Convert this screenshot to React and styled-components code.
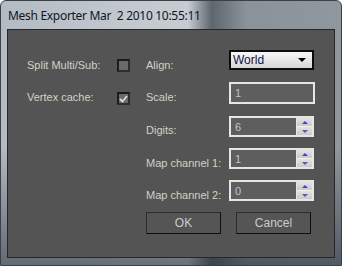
import React from 'react'
import styled, { createGlobalStyle } from 'styled-components'

const Global = createGlobalStyle`
body {
  margin: 0;
  background: #ffffff;
}
`

const Window = styled.div`
width: 342px;
height: 266px;
box-sizing: border-box;
display: flex;
flex-direction: column;
border: 1px solid #3a4046;
border-radius: 6px 6px 0 0;
background:
  linear-gradient(180deg, rgba(0,0,0,0) 0%, rgba(0,0,0,0) 55%, rgba(30,38,48,0.55) 100%),
  linear-gradient(90deg, #b3bbc3 0%, #c3c9cf 40%, #c6ccd2 55%, #5d656d 62%, #8a929a 72%, #8f979f 100%);
overflow: hidden;
`

const TitleBar = styled.div`
height: 28px;
display: flex;
align-items: center;
padding: 1px 0 0 7px;
box-sizing: border-box;
font-family: "Noto Sans", sans-serif;
font-size: 12px;
letter-spacing: -0.3px;
color: #101522;
white-space: pre;
`

const Client = styled.div`
flex: 1;
margin: 0 6px 7px 6px;
border: 1px solid #24282c;
background: #545454;
display: grid;
grid-template-columns: 90px 29px 83px 86px;
grid-template-rows: 32px 34px 32px 32px 32px 22px;
align-items: start;
padding: 20px 0 0 19px;
font-family: "Liberation Sans", Arial, sans-serif;
font-size: 11px;
color: #d2d2c4;
`

const Label = styled.div`
line-height: 13px;
padding-top: ${p => p.top || 9}px;
white-space: nowrap;
`

const Check = styled.div`
width: 13px;
height: 13px;
margin-top: ${p => p.top}px;
box-sizing: border-box;
border: 2px solid #1c1c1c;
border-right-color: #2e2e2e;
border-bottom-color: #2e2e2e;
background: #6a6a6a;
display: flex;
align-items: center;
justify-content: center;
`

const Select = styled.div`
width: 85px;
height: 20px;
box-sizing: border-box;
border: 2px solid #0c0c0c;
background: linear-gradient(180deg, #f6f6f6 0%, #e8e8e8 50%, #d6d6d6 100%);
display: flex;
align-items: center;
justify-content: space-between;
padding: 0 6px 0 2px;
font-size: 12px;
color: #10124a;
`

const Arrow = styled.div`
width: 0;
height: 0;
border-left: 4px solid transparent;
border-right: 4px solid transparent;
border-top: 4px solid #000;
`

const Field = styled.div`
width: ${p => p.w}px;
height: ${p => p.h}px;
box-sizing: border-box;
border: 2px solid #e6e6e6;
background: #5e5e5e;
display: flex;
`

const FieldText = styled.div`
flex: 1;
padding: 3px 0 0 4px;
line-height: 13px;
color: #b9c6d4;
`

const Spin = styled.div`
width: 15px;
display: flex;
flex-direction: column;
border-left: 1px solid #e6e6e6;
`

const SpinButton = styled.div`
flex: 1;
background: linear-gradient(180deg, #e2e2e2, #cacaca);
border-top: ${p => (p.bottom ? '1px solid #f2f2f2' : 'none')};
display: flex;
align-items: center;
justify-content: center;
`

const Tri = styled.div`
width: 0;
height: 0;
border-left: 3px solid transparent;
border-right: 3px solid transparent;
${p => (p.down ? 'border-top: 3px solid #4a5ad0;' : 'border-bottom: 3px solid #3a4ac0;')}
`

const Buttons = styled.div`
grid-column: 3 / 5;
display: flex;
gap: 15px;
`

const Button = styled.div`
width: 75px;
height: 22px;
box-sizing: border-box;
border: 1px solid #2c2c2c;
border-right-color: #0e0e0e;
border-bottom-color: #0e0e0e;
background: #555555;
display: flex;
align-items: center;
justify-content: center;
font-size: 12px;
color: #c8ccd0;
`

function Spinner({ value }) {
  return (
    <Field w={85} h={21}>
      <FieldText>{value}</FieldText>
      <Spin>
        <SpinButton><Tri /></SpinButton>
        <SpinButton bottom><Tri down /></SpinButton>
      </Spin>
    </Field>
  )
}

export default function App() {
  return (
    <>
      <Global />
      <Window>
        <TitleBar>Mesh Exporter Mar  2 2010 10:55:11</TitleBar>
        <Client>
          <Label>Split Multi/Sub:</Label>
          <Check top={9} />
          <Label>Align:</Label>
          <Select>World<Arrow /></Select>

          <Label>Vertex cache:</Label>
          <Check top={10}>
            <svg width="9" height="8" viewBox="0 0 9 8">
              <path d="M1 4 L3.5 6.5 L8 1" fill="none" stroke="#dcdcdc" strokeWidth="1.8" />
            </svg>
          </Check>
          <Label>Scale:</Label>
          <Field w={86} h={22}><FieldText>1</FieldText></Field>

          <div />
          <div />
          <Label top={8}>Digits:</Label>
          <Spinner value="6" />

          <div />
          <div />
          <Label>Map channel 1:</Label>
          <Spinner value="1" />

          <div />
          <div />
          <Label>Map channel 2:</Label>
          <Spinner value="0" />

          <div />
          <div />
          <Buttons>
            <Button>OK</Button>
            <Button>Cancel</Button>
          </Buttons>
        </Client>
      </Window>
    </>
  )
}
